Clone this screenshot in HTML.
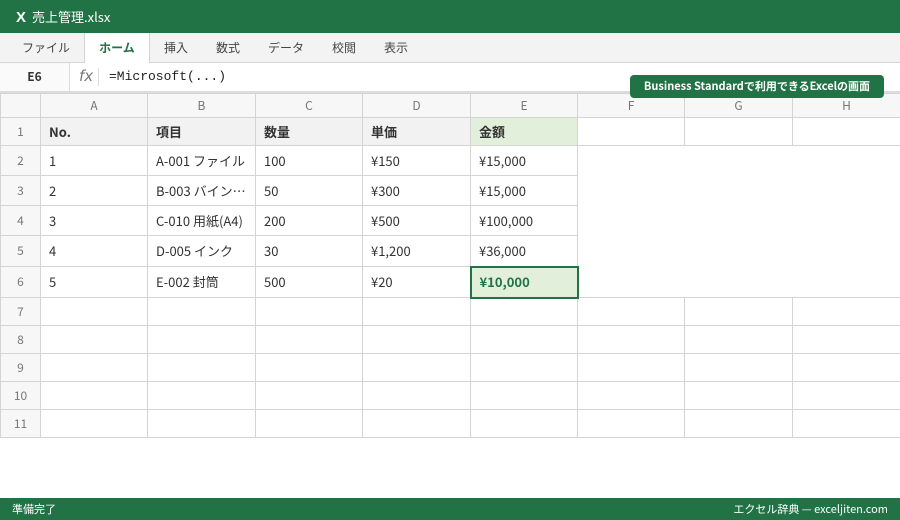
<!DOCTYPE html>
<html><head><meta charset="utf-8"><style>
*{box-sizing:border-box;margin:0;padding:0}
body{width:900px;height:520px;overflow:hidden;background:#fff;font-family:"Noto Sans CJK JP","Liberation Sans",sans-serif;color:#333;position:relative}
.title{position:absolute;left:0;top:0;width:900px;height:33px;background:#217346;color:#fff;font-size:13px;line-height:33px;padding-left:16px}
.title b{font-size:15px;margin-right:6px;font-family:"Liberation Sans",sans-serif}
.tabs{position:absolute;left:0;top:33px;width:900px;height:30px;background:#f3f3f3;border-bottom:1px solid #d4d4d4}
.tab{position:absolute;top:0;height:30px;line-height:30px;font-size:12px;color:#444;text-align:center}
.tab.act{background:#fff;color:#217346;font-weight:bold;border-left:1px solid #d4d4d4;border-right:1px solid #d4d4d4;height:30px}
.fbar{position:absolute;left:0;top:63px;width:900px;height:30px;background:#fff;border-bottom:2px solid #ddd}
.name{position:absolute;left:0;top:0;width:70px;height:28px;line-height:28px;text-align:center;font-size:12px;font-weight:bold;background:#fafafa;border-right:1px solid #ddd}
.fx{position:absolute;left:79px;top:4px;font-style:italic;color:#777;font-size:15px;font-family:"DejaVu Sans",sans-serif}
.sep{position:absolute;left:98px;top:5px;width:1px;height:18px;background:#ddd}
.form{position:absolute;left:109px;top:0;line-height:28px;font-family:"Liberation Mono",monospace;font-size:13px;color:#222}
.badge{position:absolute;left:630px;top:75px;width:254px;height:23px;background:#217346;color:#fff;border-radius:4px;font-size:11px;font-weight:bold;text-align:center;line-height:23px;z-index:5}
table{position:absolute;left:0;top:93px;border-collapse:collapse;table-layout:fixed;width:900px}
td{border:1px solid #d4d4d4;font-size:13px;padding-left:8px;white-space:nowrap;overflow:hidden;vertical-align:middle;line-height:18px}
td.h{background:#f7f7f7;color:#777;text-align:center;padding:0;font-size:12px}
tr.r1 td{background:#f2f2f2;font-weight:bold}
tr.r1 td.h{font-weight:normal;background:#f7f7f7}
td.g{background:#e2efda!important}
td.sel{background:#e2efda;border:2px solid #217346;color:#217346;font-weight:bold}
td.empty{border:none;background:#fff}
.status{position:absolute;left:0;top:498px;width:900px;height:22px;background:#217346;color:#fff;font-size:11px;line-height:22px;padding:0 12px}
.status span{float:right}
</style></head><body>
<div class="title"><b>X</b>売上管理.xlsx</div>
<div class="tabs">
<div class="tab" style="left:12px;width:68px">ファイル</div>
<div class="tab act" style="left:84px;width:66px">ホーム</div>
<div class="tab" style="left:155px;width:42px">挿入</div>
<div class="tab" style="left:207px;width:42px">数式</div>
<div class="tab" style="left:260px;width:52px">データ</div>
<div class="tab" style="left:322px;width:44px">校閲</div>
<div class="tab" style="left:374px;width:44px">表示</div>
</div>
<div class="fbar"><div class="name">E6</div><div class="fx">fx</div><div class="sep"></div><div class="form">=Microsoft(...)</div></div>
<div class="badge">Business Standardで利用できるExcelの画面</div>
<table>
<colgroup><col style="width:40px"><col style="width:107px"><col style="width:108px"><col style="width:107px"><col style="width:108px"><col style="width:107px"><col style="width:107px"><col style="width:108px"><col style="width:108px"></colgroup>
<tr style="height:24px"><td class="h"></td><td class="h">A</td><td class="h">B</td><td class="h">C</td><td class="h">D</td><td class="h">E</td><td class="h">F</td><td class="h">G</td><td class="h">H</td></tr>
<tr class="r1" style="height:28px"><td class="h">1</td><td>No.</td><td>項目</td><td>数量</td><td>単価</td><td class="g">金額</td><td style="background:#fff"></td><td style="background:#fff"></td><td style="background:#fff"></td></tr>
<tr style="height:30px"><td class="h">2</td><td>1</td><td>A-001 ファイル</td><td>100</td><td>¥150</td><td>¥15,000</td><td class="empty" colspan="3" rowspan="5"></td></tr>
<tr style="height:30px"><td class="h">3</td><td>2</td><td>B-003 バイン…</td><td>50</td><td>¥300</td><td>¥15,000</td></tr>
<tr style="height:30px"><td class="h">4</td><td>3</td><td>C-010 用紙(A4)</td><td>200</td><td>¥500</td><td>¥100,000</td></tr>
<tr style="height:31px"><td class="h">5</td><td>4</td><td>D-005 インク</td><td>30</td><td>¥1,200</td><td>¥36,000</td></tr>
<tr style="height:31px"><td class="h">6</td><td>5</td><td>E-002 封筒</td><td>500</td><td>¥20</td><td class="sel">¥10,000</td></tr>
<tr style="height:28px"><td class="h">7</td><td></td><td></td><td></td><td></td><td></td><td></td><td></td><td></td></tr>
<tr style="height:28px"><td class="h">8</td><td></td><td></td><td></td><td></td><td></td><td></td><td></td><td></td></tr>
<tr style="height:28px"><td class="h">9</td><td></td><td></td><td></td><td></td><td></td><td></td><td></td><td></td></tr>
<tr style="height:28px"><td class="h">10</td><td></td><td></td><td></td><td></td><td></td><td></td><td></td><td></td></tr>
<tr style="height:28px"><td class="h">11</td><td></td><td></td><td></td><td></td><td></td><td></td><td></td><td></td></tr>
</table>
<div class="status">準備完了<span>エクセル辞典 — exceljiten.com</span></div>
</body></html>
